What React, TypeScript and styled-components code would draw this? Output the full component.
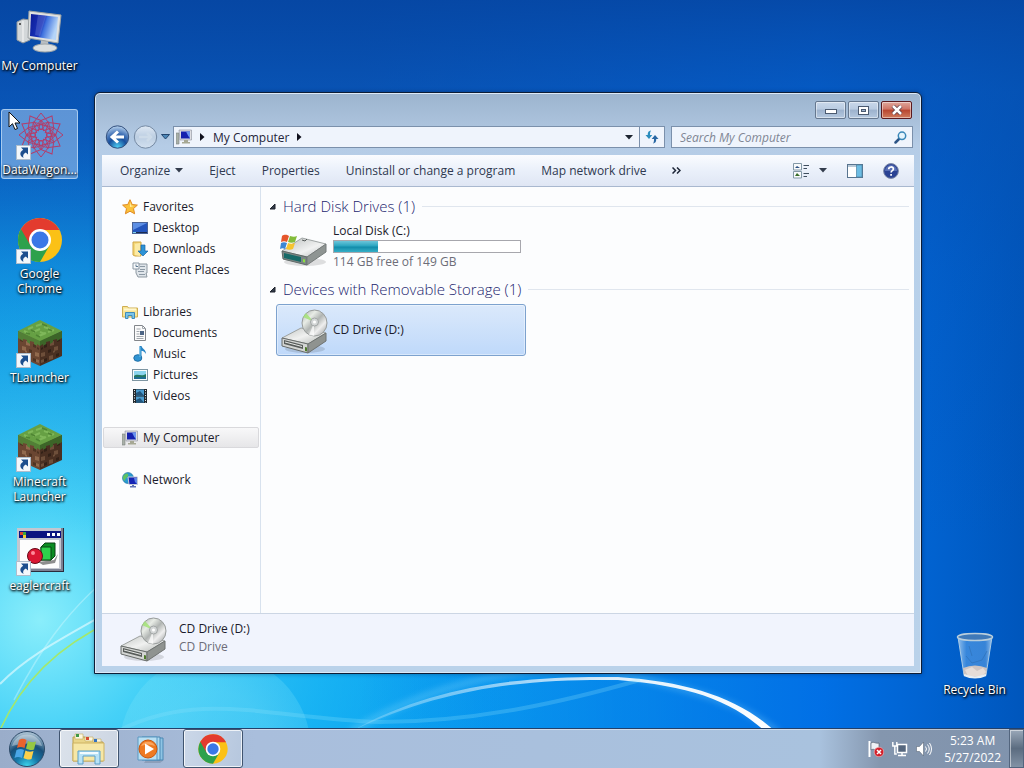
import React from "react";
import styled, { createGlobalStyle, css } from "styled-components";

const GlobalStyle = createGlobalStyle`
  * {
    box-sizing: border-box;
  }

  body {
    margin: 0;
    overflow: hidden;
    font-family: "Open Sans", "Noto Sans", sans-serif;
    font-size: 12px;
    line-height: 15px;
    color: #1b1b2b;
  }

  button,
  input {
    margin: 0;
    padding: 0;
    border: 0;
    background: none;
    font: inherit;
    color: inherit;
  }

  svg {
    display: block;
    flex-shrink: 0;
  }
`;

const Screen = styled.div`
  display: flex;
  flex-direction: column;
  height: 100vh;
  position: relative;
  isolation: isolate;
`;

const WallpaperSvg = styled.svg`
  position: absolute;
  inset: 0;
  width: 100%;
  height: 100%;
  z-index: -1;
`;

const Desktop = styled.main`
  flex: 1;
  min-height: 0;
  position: relative;
`;

const ShortcutColumn = styled.div`
  display: grid;
  grid-auto-rows: 104px;
  width: 78px;
  padding: 5px 0 0 1px;
`;

const ShortcutButton = styled.button<{ $selected?: boolean }>`
  display: flex;
  flex-direction: column;
  align-items: center;
  align-self: start;
  gap: 2px;
  width: 77px;
  padding: 2px 0 1px;
  border: 1px solid transparent;
  border-radius: 3px;
  color: #fff;
  text-shadow: 1px 1px 2px #000, 0 1px 3px #000;
  ${({ $selected }) =>
    $selected &&
    css`
      background: rgba(150, 190, 235, 0.6);
      border-color: rgba(185, 215, 245, 0.8);
    `}
`;

const ShortcutPicture = styled.span`
  position: relative;
  width: 48px;
  height: 48px;
`;

const ArrowBadge = styled.span`
  position: absolute;
  left: 0;
  bottom: 0;
`;

const ShortcutLabel = styled.span`
  white-space: nowrap;
  span {
    display: block;
  }
`;

const RecycleSpot = styled.div`
  position: absolute;
  right: 11px;
  bottom: 29px;
`;

const Cursor = styled.svg`
  position: absolute;
  left: 8px;
  top: 111px;
`;

const Window = styled.section`
  position: absolute;
  left: 94px;
  top: 92px;
  right: 102px;
  bottom: 54px;
  display: flex;
  flex-direction: column;
  padding: 0 7px 7px;
  border: 1px solid #0d1d36;
  border-radius: 6px 6px 0 0;
  background: linear-gradient(#9cb4ce, #b5cce6 52px, #b7d0ea 90px, #bad2ea);
  box-shadow: inset 0 0 0 1px #dce9f7, 0 0 4px rgba(0, 20, 60, 0.4);
`;

const Caption = styled.header`
  display: flex;
  justify-content: flex-end;
  gap: 2px;
  height: 32px;
  padding: 8px 2px 0 0;
`;

const CaptionButton = styled.button<{ $close?: boolean }>`
  display: grid;
  place-items: center;
  width: 31px;
  height: 18px;
  border: 1px solid ${({ $close }) => ($close ? "#5b1a1f" : "#66788f")};
  border-radius: 2px;
  background: ${({ $close }) =>
    $close
      ? "linear-gradient(#dfa79c, #cf7465 45%, #b8452f 50%, #d07c5e)"
      : "linear-gradient(#c9d8ea, #b9cbe1 45%, #9db2cd 50%, #b4c8df)"};
  box-shadow: inset 0 0 0 1px rgba(255, 255, 255, 0.45);
`;

const NavigationBar = styled.div`
  display: flex;
  align-items: center;
  height: 24px;
  margin-bottom: 6px;
  padding: 0 1px 0 3px;
`;

const TravelButtons = styled.div`
  display: flex;
  align-items: center;
  gap: 3px;
  margin-right: 3px;
`;

const AddressBar = styled.div`
  display: flex;
  align-items: center;
  flex: 1;
  height: 22px;
  border: 1px solid #7b90ab;
  background: #eff4fc;
`;

const Crumb = styled.button`
  display: flex;
  align-items: center;
  gap: 8px;
  height: 20px;
  padding-left: 2px;
  color: #25253a;
`;

const AddressButton = styled.button<{ $divided?: boolean }>`
  display: grid;
  place-items: center;
  width: ${({ $divided }) => ($divided ? 25 : 20)}px;
  height: 20px;
  margin-left: ${({ $divided }) => ($divided ? "0" : "auto")};
  border-left: ${({ $divided }) => ($divided ? "1px solid #7b90ab" : "0")};
`;

const SearchBox = styled.label`
  display: flex;
  align-items: center;
  width: 242px;
  height: 22px;
  margin-left: 6px;
  padding: 0 5px 0 8px;
  border: 1px solid #7b90ab;
  background: #eff4fc;
  input {
    flex: 1;
    min-width: 0;
    outline: none;
  }
  input::placeholder {
    color: #808694;
    font-style: italic;
    opacity: 1;
  }
`;

const Client = styled.div`
  display: flex;
  flex-direction: column;
  flex: 1;
  min-height: 0;
  background: #fcfdfe;
`;

const Toolbar = styled.div`
  display: flex;
  align-items: center;
  height: 32px;
  padding: 0 15px 0 18px;
  gap: 26px;
  border-bottom: 1px solid #a9b8cf;
  background: linear-gradient(#fafcff, #eaf0fa 50%, #dfe6f4);
  color: #2f3950;
`;

const ToolbarButton = styled.button`
  display: flex;
  align-items: center;
  gap: 5px;
  white-space: nowrap;
`;

const ToolbarEnd = styled.div`
  display: flex;
  align-items: center;
  gap: 20px;
  margin-left: auto;
`;

const Body = styled.div`
  display: flex;
  flex: 1;
  min-height: 0;
`;

const Sidebar = styled.nav`
  display: flex;
  flex-direction: column;
  gap: 21px;
  width: 159px;
  padding: 9px 1px 0;
  border-right: 1px solid #d8e2ee;
`;

const SidebarList = styled.ul`
  margin: 0;
  padding: 0;
  list-style: none;
`;

const SidebarButton = styled.button<{ $child?: boolean; $selected?: boolean }>`
  display: flex;
  align-items: center;
  gap: 5px;
  width: 100%;
  height: 21px;
  padding-left: ${({ $child }) => ($child ? 28 : 18)}px;
  border: 1px solid transparent;
  border-radius: 2px;
  ${({ $selected }) =>
    $selected &&
    css`
      border-color: #d9d9dc;
      background: linear-gradient(#f8f8f9, #e6e6e8);
    `}
`;

const Files = styled.div`
  flex: 1;
  padding: 6px 5px 0 8px;
`;

const GroupTitle = styled.h2`
  display: flex;
  align-items: center;
  gap: 7px;
  height: 26px;
  margin: 0;
  font-size: 15px;
  font-weight: 300;
  line-height: 20px;
  color: #1c266e;
  white-space: nowrap;
  &::after {
    content: "";
    flex: 1;
    height: 1px;
    background: #e0e6ee;
  }
`;

const DriveButton = styled.button<{ $selected?: boolean }>`
  display: flex;
  align-items: center;
  gap: 5px;
  width: 250px;
  height: 52px;
  margin: 2px 0 3px 7px;
  padding: 0 4px 0 3px;
  border: 1px solid transparent;
  border-radius: 3px;
  text-align: left;
  ${({ $selected }) =>
    $selected &&
    css`
      border-color: #7da2ce;
      background: linear-gradient(#dbe9fb, #bfd9fa);
      box-shadow: inset 0 0 0 1px rgba(255, 255, 255, 0.4);
    `}
`;

const DriveText = styled.span`
  flex: 1;
  padding-bottom: 2px;
`;

const Muted = styled.span`
  display: block;
  color: #6d6d78;
`;

const Capacity = styled.span`
  display: block;
  height: 13px;
  margin: 2px 0 1px;
  border: 1px solid #a7a7ad;
  background: #fff;
`;

const CapacityUsed = styled.span`
  display: block;
  height: 100%;
  background: linear-gradient(#6cc5da, #2aa5c0 45%, #128ba9 55%, #35b0c8);
`;

const DetailsPane = styled.footer`
  display: flex;
  align-items: center;
  gap: 12px;
  height: 53px;
  padding: 0 17px 4px;
  border-top: 1px solid #ccd6e4;
  background: #f1f4fd;
  line-height: 18px;
`;

const Taskbar = styled.footer`
  display: flex;
  height: 40px;
  border-top: 1px solid #23406a;
  background: linear-gradient(
    90deg,
    #9aadca,
    #a9bedc 25%,
    #a9c2de 80%,
    #8496ae 86%,
    #8093ad
  );
  box-shadow: inset 0 1px 0 rgba(255, 255, 255, 0.45);
`;

const StartButton = styled.button`
  display: grid;
  place-items: center;
  width: 54px;
`;

const TaskButton = styled.button<{ $open?: boolean; $bright?: boolean }>`
  display: grid;
  place-items: center;
  width: 60px;
  margin-left: ${({ $bright }) => ($bright ? 5 : 2)}px;
  border: 1px solid transparent;
  border-radius: 3px;
  ${({ $open, $bright }) =>
    $open &&
    css`
      border-color: #40546f;
      background: ${$bright
        ? "linear-gradient(100deg, #dbe2eb, #ccd5e2)"
        : "linear-gradient(100deg, #cbd7e8, #b6c7de)"};
      box-shadow: inset 0 0 0 1px rgba(255, 255, 255, 0.75);
    `}
`;

const Tray = styled.div`
  display: flex;
  align-items: center;
  gap: 8px;
  margin-left: auto;
`;

const Clock = styled.time`
  margin-left: 4px;
  color: #fff;
  text-align: center;
  line-height: 17px;
  span {
    display: block;
  }
`;

const ShowDesktop = styled.button`
  align-self: stretch;
  width: 15px;
  border: 1px solid #53657e;
  background: linear-gradient(#9aa8b9, #5b6c80 50%, #8292a5);
  box-shadow: inset 1px 1px 0 rgba(255, 255, 255, 0.5);
`;

const Wallpaper = () => (
  <WallpaperSvg viewBox="0 0 1024 768" preserveAspectRatio="none" aria-hidden>
    <defs>
      <linearGradient id="sky" x1="0" y1="0" x2="0" y2="1">
        <stop offset="0" stopColor="#0647a4" />
        <stop offset="0.12" stopColor="#0a58ba" />
        <stop offset="0.25" stopColor="#0c74d2" />
        <stop offset="0.4" stopColor="#0f96e6" />
        <stop offset="0.7" stopColor="#0fa6f0" />
        <stop offset="1" stopColor="#0aa4f2" />
      </linearGradient>
      <radialGradient
        id="glow"
        gradientUnits="userSpaceOnUse"
        cx="40"
        cy="620"
        r="480"
      >
        <stop offset="0" stopColor="#8aeefb" />
        <stop offset="0.25" stopColor="#4cd6f8" stopOpacity="0.9" />
        <stop offset="0.6" stopColor="#20bcf4" stopOpacity="0.6" />
        <stop offset="1" stopColor="#0c9cec" stopOpacity="0" />
      </radialGradient>
      <linearGradient id="right" x1="0" y1="0" x2="1" y2="0">
        <stop offset="0.35" stopColor="#0068e4" stopOpacity="0" />
        <stop offset="0.8" stopColor="#006ae4" stopOpacity="0.9" />
        <stop offset="1" stopColor="#0056bc" />
      </linearGradient>
      <linearGradient id="top" x1="0" y1="0" x2="0" y2="1">
        <stop offset="0" stopColor="#0647a4" stopOpacity="0.9" />
        <stop offset="0.12" stopColor="#0850b0" stopOpacity="0.6" />
        <stop offset="0.35" stopColor="#0850b0" stopOpacity="0.2" />
        <stop offset="0.7" stopColor="#0850b0" stopOpacity="0" />
      </linearGradient>
      <linearGradient id="arc" x1="0" y1="0" x2="1" y2="0">
        <stop offset="0" stopColor="#fff" stopOpacity="0.15" />
        <stop offset="0.6" stopColor="#fff" stopOpacity="0.85" />
        <stop offset="1" stopColor="#fff" />
      </linearGradient>
      <radialGradient id="bubble">
        <stop offset="0.6" stopColor="#8feaf8" stopOpacity="0.3" />
        <stop offset="1" stopColor="#8feaf8" stopOpacity="0.2" />
      </radialGradient>
      <filter id="soft">
        <feGaussianBlur stdDeviation="3" />
      </filter>
    </defs>
    <rect width="1024" height="768" fill="url(#sky)" />
    <rect width="1024" height="768" fill="url(#glow)" />
    <rect width="1024" height="768" fill="url(#right)" />
    <rect width="1024" height="768" fill="url(#top)" />
    <circle cx="215" cy="750" r="96" fill="url(#bubble)" />
    <path
      d="M350 732C450 672 560 660 630 676C690 690 740 700 780 735"
      fill="none"
      stroke="#9be4ff"
      strokeWidth="6"
      opacity="0.3"
      filter="url(#soft)"
    />
    <path
      d="M350 732C440 680 540 676 618 677C690 682 740 698 778 734L768 734C732 700 690 686 618 680C540 679 450 684 350 732Z"
      fill="url(#arc)"
    />
    <path
      d="M120 730C200 690 270 718 380 722C480 722 570 700 640 680"
      fill="none"
      stroke="#8fe4fc"
      strokeWidth="4"
      opacity="0.25"
    />
    <path
      d="M0 684C28 655 60 640 130 600"
      fill="none"
      stroke="#effdff"
      strokeWidth="2"
      opacity="0.6"
    />
    <path
      d="M0 730C18 690 50 650 110 622"
      fill="none"
      stroke="#a4e86a"
      strokeWidth="1.500"
    />
    <path
      d="M14 700C30 670 60 610 130 560"
      fill="none"
      stroke="#d6fbff"
      strokeWidth="1.500"
      opacity="0.4"
    />
  </WallpaperSvg>
);

const ShortcutArrow = () => (
  <svg width="15" height="15" viewBox="0 0 15 15">
    <rect x=".5" y=".5" width="14" height="14" fill="#f3f7fb" stroke="#aebdcc" />
    <path
      d="M5 2.500h7v7L9.800 7.400C7.500 8.500 6.500 10.500 7.500 13C3.500 11 3.200 7 7.200 4.800Z"
      fill="#1c4e8e"
    />
  </svg>
);

const ComputerIcon = () => (
  <svg width="48" height="48" viewBox="0 0 48 48">
    <defs>
      <linearGradient id="crt" x1="0" y1="0" x2="1" y2="0.300">
        <stop offset="0" stopColor="#0b1a94" />
        <stop offset="0.500" stopColor="#1a34bc" />
        <stop offset="0.620" stopColor="#3f72de" />
        <stop offset="1" stopColor="#b4d4f8" />
      </linearGradient>
    </defs>
    <path d="M1 14l6-3 7 1v20l-7 3-6-3z" fill="#d3d7d9" stroke="#8f979d" />
    <path d="M7 13v21" stroke="#f8f8f8" />
    <circle cx="4" cy="16" r="1" fill="#333" />
    <path d="M25 32l7 1 1 7h-9z" fill="#b9bec2" />
    <ellipse cx="29" cy="40" rx="12" ry="4" fill="#dcdfdf" stroke="#9ea5a8" />
    <path d="M13 3l32 4-3 28-30-5z" fill="#dfe1e1" stroke="#9da3a5" />
    <path d="M15 6l27 3-2 23-26-4z" fill="url(#crt)" />
    <path d="M22 7l8 1-6 20-5-1z" fill="#fff" opacity=".14" />
  </svg>
);

const SmallComputerIcon = () => (
  <svg width="16" height="16" viewBox="0 0 16 16">
    <path d="M0 4h3v11H0z" fill="#a9b0a8" stroke="#7d857f" strokeWidth=".6" />
    <path d="M3 1h12.500v10H4z" fill="#dedfe4" stroke="#8b8f9a" strokeWidth=".6" />
    <path d="M5 2.500h9v7H5z" fill="#1521ae" />
    <path d="M10 2.500h4v7l-2-3z" fill="#6a93ee" />
    <path d="M8 11h4v2h2v1.500H6V13h2z" fill="#a6a894" />
  </svg>
);

const SpirographIcon = () => (
  <svg width="48" height="48" viewBox="0 0 48 48">
    <g fill="none" stroke="#b23e6c" strokeWidth="1" transform="translate(25 23)">
      {Array.from({ length: 12 }, (_, i) => (
        <g key={i} transform={`rotate(${i * 30})`}>
          <path d="M0 -5L-7 -13L0 -22L7 -13Z" />
          <path d="M-10 -4L0 -15L10 -4" opacity=".8" />
        </g>
      ))}
      <circle r="6" />
    </g>
  </svg>
);

const ChromeIcon = ({ size = 48 }: { size?: number }) => (
  <svg width={size} height={size} viewBox="0 0 48 48">
    <circle cx="24" cy="24" r="22" fill="#fbc116" />
    <path d="M24 24L33.500 29.500L24 46A22 22 0 0 1 4.950 13Z" fill="#2da14c" />
    <path d="M24 14H43.600A22 22 0 0 0 4.950 13L14.500 29.500Z" fill="#e33b2e" />
    <circle cx="24" cy="24" r="11" fill="#fff" />
    <circle cx="24" cy="24" r="8.500" fill="#3b78e7" />
  </svg>
);

const leftDirt = [
  [4, 19, 3], [10, 22, 4], [17, 25, 3], [6, 27, 4], [13, 30, 3], [19, 33, 4],
  [5, 34, 3], [11, 36, 4], [17, 39, 3], [9, 31, 2], [21, 28, 2], [20, 40, 3],
];

const GrassBlockIcon = () => (
  <svg width="48" height="48" viewBox="0 0 48 48">
    <path d="M2 11L24 20V46L2 36Z" fill="#6b4632" />
    <path d="M46 11L24 20V46L46 36Z" fill="#4a3022" />
    {leftDirt.map(([x, y, s], i) => (
      <g key={i}>
        <path
          d={`M${x} ${y - 1}l${s} 1v${s}l-${s}-1z`}
          fill={i % 2 ? "#91694d" : "#4e3322"}
        />
        <path
          d={`M${48 - x} ${y - 1}l-${s} 1v${s}l${s}-1z`}
          fill={i % 2 ? "#6e4f3a" : "#332117"}
        />
      </g>
    ))}
    <path d="M24 0L46 11L24 22L2 11Z" fill="#66a044" />
    <path
      d="M2 11L24 21v5l-3-2v2l-3-2v-2l-4-1v3l-3-2v-2l-4-1v2l-5-3Z"
      fill="#527f36"
    />
    <path
      d="M46 11L24 21v5l3-2v2l3-2v-2l4-1v3l3-2v-2l4-1v2l5-3Z"
      fill="#3c6528"
    />
    <path
      d="M12 9l5-2M20 6l6-2M17 12l7-3M28 7l6 2M23 16l7-3M32 12l6-2M8 11l4 2M24 12l5 2"
      stroke="#7fb85a"
      strokeWidth="2"
    />
    <path
      d="M15 10l4 2M26 4l5 2M20 15l4 2M32 9l4 2M10 13l4 1"
      stroke="#4f8534"
      strokeWidth="1.500"
    />
  </svg>
);

const ProgramIcon = () => (
  <svg width="48" height="48" viewBox="0 0 48 48">
    <rect x="1" y="0" width="47" height="44" fill="#2a2c3c" />
    <rect x="1" y="0" width="46" height="43" fill="#7b8092" />
    <rect x="1" y="0" width="44" height="41" fill="#c3c7d0" />
    <rect x="3" y="3" width="42" height="7" fill="#0b1480" />
    <path d="M4 4h3v3H4z" fill="#dc442c" />
    <path d="M7 4h3v3H7z" fill="#3ba53b" />
    <path d="M7 7h3v3H7z" fill="#f3c932" />
    <path d="M31 5h3v3h-3zM36 5h3v3h-3zM41 5h3v3h-3z" fill="#fff" />
    <path d="M4 12h39v28H4z" fill="#fdfdfd" />
    <path d="M22 34l16-2 4-6-3 9-12 2z" fill="#8e8e8e" />
    <path d="M25 19l4-4h10v13l-4 4H25z" fill="#0c8c23" stroke="#0a4314" />
    <path d="M25 19h10v13H25z" fill="#2ed14b" stroke="#0a4314" />
    <circle cx="19" cy="28" r="7.500" fill="#da1733" stroke="#650918" />
    <circle cx="17" cy="25" r="2" fill="#ff8c9b" />
  </svg>
);

const RecycleBinIcon = () => (
  <svg width="48" height="48" viewBox="0 0 48 48">
    <defs>
      <linearGradient id="glass" x1="0" y1="0" x2="1" y2="0">
        <stop offset="0" stopColor="#d7ecfb" stopOpacity=".7" />
        <stop offset=".25" stopColor="#6fb0ee" stopOpacity=".5" />
        <stop offset=".8" stopColor="#7bb6ee" stopOpacity=".45" />
        <stop offset="1" stopColor="#e0f0fb" stopOpacity=".7" />
      </linearGradient>
    </defs>
    <path d="M7 5H41L35 43Q24 48 13 43Z" fill="url(#glass)" stroke="#a9cbe6" />
    <path d="M12 36Q24 31 36 36L35 43Q24 48 13 43Z" fill="#cfc5c2" />
    <path d="M14 38l7-3 5 4 6-3 3 4-4 4H17z" fill="#e6ddd8" />
    <path d="M15 24l6 7 10-3 5-9M18 14l3 10" fill="none" stroke="#2f72b9" opacity=".7" />
    <ellipse cx="24" cy="5" rx="17.500" ry="3.500" fill="#3f79b8" stroke="#b9cedc" strokeWidth="1.500" />
    <path d="M13 43Q24 48 35 43" stroke="#e8eff4" strokeWidth="2" fill="none" />
  </svg>
);

const HardDiskIcon = () => (
  <svg width="48" height="48" viewBox="0 0 48 48">
    <defs>
      <linearGradient id="lid" x1="0" y1="0" x2="1" y2="1">
        <stop offset="0" stopColor="#b9bdbc" />
        <stop offset=".6" stopColor="#f1f2f2" />
        <stop offset="1" stopColor="#b4b8b7" />
      </linearGradient>
    </defs>
    <ellipse cx="25" cy="39" rx="21" ry="4" fill="#000" opacity=".12" />
    <path d="M2 28L22 15L46 21L27 34Z" fill="url(#lid)" stroke="#a0a5a5" />
    <path d="M2 28L27 34V42L3 36Z" fill="#7d8785" stroke="#5f6967" />
    <path d="M27 34L46 21V29L27 42Z" fill="#8f9593" stroke="#757b7a" />
    <path d="M4 30L21 34V39L4 35Z" fill="#176a68" />
    <path d="M23 36l2 .5v3l-2-.5z" fill="#8be33f" />
    <path d="M22 17l3 1 2-2" fill="none" stroke="#555b5a" />
    <path d="M2 13c3-2 5-1 7 0l-2 6c-2-1-4-1-6 0z" fill="#e5562b" />
    <path d="M10 13c3 1 5 1 7 0l-2 6c-2 1-5 1-7 0z" fill="#83bc3b" />
    <path d="M1 20c2-1 4-1 6 0l-2 6c-2-1-3-1-5 0z" fill="#3c86d4" />
    <path d="M8 20c2 1 5 1 7 0l-2 6c-2 1-5 1-7 0z" fill="#f6c42f" />
  </svg>
);

const CdDriveIcon = () => (
  <svg width="48" height="48" viewBox="0 0 48 48">
    <defs>
      <linearGradient id="disc" x1="0" y1="0" x2="1" y2="1">
        <stop offset="0" stopColor="#a5aaa7" />
        <stop offset=".3" stopColor="#e8ece6" />
        <stop offset=".5" stopColor="#b0b4b2" />
        <stop offset=".7" stopColor="#efefef" />
        <stop offset="1" stopColor="#8f9394" />
      </linearGradient>
      <linearGradient id="tray" x1="0" y1="0" x2="1" y2="1">
        <stop offset="0" stopColor="#c3c6c4" />
        <stop offset=".5" stopColor="#f0f1f0" />
        <stop offset="1" stopColor="#b2b6b3" />
      </linearGradient>
    </defs>
    <ellipse cx="25" cy="43" rx="20" ry="4" fill="#000" opacity=".12" />
    <path d="M2 32L21 22L46 27L28 38Z" fill="url(#tray)" stroke="#9ea2a0" />
    <ellipse cx="34.500" cy="17" rx="12.500" ry="13" fill="url(#disc)" stroke="#989c9b" />
    <path d="M34 16L23 11l3-4z" fill="#a3e378" opacity=".85" />
    <path d="M34 17L29 29l5 1z" fill="#fff" opacity=".7" />
    <ellipse cx="34.500" cy="16" rx="4" ry="4" fill="#d3d6d6" stroke="#a2a6a6" />
    <circle cx="34.500" cy="16" r="1.500" fill="#fff" />
    <path d="M2 32L28 38V47L2 40Z" fill="#d3d5d3" stroke="#676b69" />
    <path d="M28 38L46 27V35L28 47Z" fill="#8f9390" stroke="#6e7270" />
    <path d="M4 34l19 5v4L4 38z" fill="#585c5a" />
    <path d="M5 36l17 4.500" stroke="#e6e8e6" />
    <path d="M25 41l2 .5v4l-2-.5z" fill="#4d7b2a" />
  </svg>
);

const StarIcon = () => (
  <svg width="16" height="16" viewBox="0 0 16 16">
    <path
      d="M8 .7l2.200 4.800 5.200.6-3.900 3.500 1.100 5.200L8 12.200l-4.600 2.600 1.100-5.200L.6 6.100l5.200-.6z"
      fill="#fbc23b"
      stroke="#e08a24"
    />
    <path d="M8 3l1 3.500 3 .5-4 1z" fill="#fff0a8" />
  </svg>
);

const DesktopIcon = () => (
  <svg width="16" height="16" viewBox="0 0 16 16">
    <rect x=".5" y="2.500" width="15" height="11" fill="#2456bd" stroke="#4a6396" />
    <path d="M1 3h14L1 10z" fill="#5d8fe4" />
    <path d="M1 12.500h14" stroke="#1b2c52" />
    <path d="M1 12.500h3" stroke="#7ed0ee" />
  </svg>
);

const DownloadsIcon = () => (
  <svg width="16" height="16" viewBox="0 0 16 16">
    <path d="M1 1h8v14H3l-2-1z" fill="#f4d878" stroke="#cfa544" />
    <path d="M3 3l5-1v13l-5-1z" fill="#fbeaa5" />
    <path d="M9 4h4v6h3l-5 5-5-5h3z" fill="#2d93d6" stroke="#1a66a6" strokeWidth=".7" />
  </svg>
);

const RecentIcon = () => (
  <svg width="16" height="16" viewBox="0 0 16 16">
    <path d="M4 2h11v9h-1l1 4H6l-2-4z" fill="#dfe5ea" stroke="#8d98a1" />
    <path d="M1 1h6v6H1z" fill="#f6f8fa" stroke="#8b98a4" />
    <path d="M8 4.500h5M8 7.500h5M6 9.500h6M7 12.500h6" stroke="#8b98a4" />
    <path d="M4 2.500v2h2" stroke="#5b7890" fill="none" />
  </svg>
);

const LibrariesIcon = () => (
  <svg width="16" height="16" viewBox="0 0 16 16">
    <path d="M.5 2.500h5l1 1.500h9v9H.5z" fill="#f8e596" stroke="#cfae52" />
    <path d="M2 5.500h12" stroke="#fff7cf" strokeWidth="2" />
    <path d="M3.500 14.500V8.500h9v6h-2.500v-3h-4v3z" fill="#7bc4e8" stroke="#3f8cba" />
  </svg>
);

const DocumentIcon = () => (
  <svg width="16" height="16" viewBox="0 0 16 16">
    <path d="M2.500.5h8l3 3v12h-11z" fill="#fbfbfb" stroke="#82868b" />
    <path d="M10.500.5v3h3M4.500 4h4M4.500 6.500h3M4.500 9h3M4.500 11.500h7M4.500 13.500h7" fill="none" stroke="#a2a8ae" />
    <path d="M8 6h4v4H8z" fill="#4c6484" />
  </svg>
);

const MusicIcon = () => (
  <svg width="16" height="16" viewBox="0 0 16 16">
    <path d="M7.500 0H9.500c1 3 4.500 3.500 4.500 8-1.500-2.500-3-3-4.500-3.200V12h-2z" fill="#2784c5" />
    <ellipse cx="5.800" cy="12" rx="4" ry="3.300" fill="#2f94d3" stroke="#1f6ea6" />
    <path d="M8 1v10" stroke="#71c5ec" />
  </svg>
);

const PicturesIcon = () => (
  <svg width="16" height="16" viewBox="0 0 16 16">
    <rect x=".5" y="2.500" width="15" height="11" fill="#f7fbfc" stroke="#7d95a2" />
    <path d="M2 4h12v8H2z" fill="#8bd4ee" />
    <path d="M2 9c4-3 7 1 12-2v5H2z" fill="#23775f" />
    <path d="M2 10h12v2H2z" fill="#1c6c92" />
  </svg>
);

const VideosIcon = () => (
  <svg width="16" height="16" viewBox="0 0 16 16">
    <path d="M1 1h14v14H1z" fill="#23292e" />
    <path d="M4 1.500h8v6H4zM4 8.500h8v6H4z" fill="#4c9dd0" />
    <path d="M4 5l4-2 4 4.500H4zM4 12l4-2 4 4.500H4z" fill="#22577e" />
    <path d="M2.500 2v13M13.500 2v13" stroke="#e8edf0" strokeDasharray="1 1.500" />
  </svg>
);

const NetworkIcon = () => (
  <svg width="16" height="16" viewBox="0 0 16 16">
    <circle cx="6" cy="6" r="5.500" fill="#2a9ad0" stroke="#1d6f9f" strokeWidth=".6" />
    <path d="M2 3c3-3 5-1 4 1S3 6 3 9C1 8 0 5 2 3z" fill="#5ec263" />
    <path d="M6 5h9.500v7.500H7z" fill="#1525b4" stroke="#c5cbd8" />
    <path d="M12 6h3v6l-2-2z" fill="#5f85e8" />
    <path d="M10 13h2v1h2v1.500H8V14h2z" fill="#5f74b4" />
  </svg>
);

const TravelIcon = ({ forward }: { forward?: boolean }) => (
  <svg width="25" height="24" viewBox="0 0 25 24">
    <defs>
      <radialGradient id="back" cx=".5" cy=".95" r=".9">
        <stop offset="0" stopColor="#4fd0f4" />
        <stop offset=".45" stopColor="#174f9d" />
        <stop offset=".7" stopColor="#4978ba" />
        <stop offset="1" stopColor="#a9c6e6" />
      </radialGradient>
      <linearGradient id="forward" x1="0" y1="0" x2="0" y2="1">
        <stop offset="0" stopColor="#dfe9f4" />
        <stop offset=".5" stopColor="#bccee2" />
        <stop offset="1" stopColor="#d3e1f0" />
      </linearGradient>
    </defs>
    <circle
      cx="12.500"
      cy="12"
      r="11.200"
      fill={forward ? "url(#forward)" : "url(#back)"}
      stroke={forward ? "#7388a2" : "#34517e"}
    />
    {forward ? (
      <path d="M6 12h12M14 8l4 4-4 4" fill="none" stroke="#cddbe9" strokeWidth="2.500" />
    ) : (
      <path d="M19 12H8M13 6.500L7 12l6 5.500" fill="none" stroke="#fff" strokeWidth="3" />
    )}
  </svg>
);

const DownCaret = ({ color = "#1c2430" }: { color?: string }) => (
  <svg width="8" height="5" viewBox="0 0 8 5">
    <path d="M0 0h8L4 4.500z" fill={color} />
  </svg>
);

const RightCaret = () => (
  <svg width="5" height="8" viewBox="0 0 5 8">
    <path d="M0 0v8l4.500-4z" fill="#10101c" />
  </svg>
);

const GroupCaret = () => (
  <svg width="7" height="7" viewBox="0 0 7 7">
    <path d="M6 1v5H1z" fill="#333b48" stroke="#1e232c" />
  </svg>
);

const RefreshIcon = () => (
  <svg width="14" height="14" viewBox="0 0 14 14">
    <path d="M6 0.500C3 1 2.800 3 2.800 5H.5l3.500 4 3.300-4H5C5 3.500 5 2 6 .5z" fill="#2b8dbd" />
    <path d="M8 13.500c3-.5 3.200-2.500 3.200-4.500h2.300L10 5 6.700 9H9c0 1.500 0 3-1 4.500z" fill="#2766a3" />
  </svg>
);

const SearchIcon = () => (
  <svg width="13" height="13" viewBox="0 0 13 13">
    <path d="M6 7L1.500 11.500" stroke="#2c5486" strokeWidth="2.500" strokeLinecap="round" />
    <circle cx="8" cy="4.800" r="3.700" fill="#e6f4fc" stroke="#3a87b8" strokeWidth="1.500" />
  </svg>
);

const ViewIcon = () => (
  <svg width="17" height="16" viewBox="0 0 17 16">
    <path d="M.5.5h8v6.500h-8zM.5 8.500h8V15h-8z" fill="#f8fafb" stroke="#8499a7" />
    <path d="M2 5l2-2 3 2z" fill="#2b4f81" />
    <path d="M2 13l2-3 3 3z" fill="#386c2a" />
    <path d="M10.500 2.500H16M10.500 5.500H14M10.500 10.500H16M10.500 13.500H14" stroke="#3f4e5e" />
  </svg>
);

const PreviewPaneIcon = () => (
  <svg width="16" height="14" viewBox="0 0 16 14">
    <rect x=".5" y=".5" width="15" height="13" fill="#fff" stroke="#58748f" />
    <path d="M1 2h9" stroke="#b9cad8" strokeWidth="2" />
    <rect x="9.500" y="1" width="5.500" height="12" fill="#6dbde4" stroke="#4a83a4" strokeWidth=".7" />
  </svg>
);

const HelpIcon = () => (
  <svg width="16" height="16" viewBox="0 0 16 16">
    <circle cx="8" cy="8" r="7.400" fill="#2a4294" stroke="#7d8aa8" />
    <path d="M2 8a6 6 0 0 1 12 0z" fill="#6c83c4" opacity=".7" />
    <path
      d="M5.700 6.300C5.700 3.200 10.500 3.300 10.400 6c0 1.700-2.300 1.600-2.300 3.500M8.100 11v1.800"
      fill="none"
      stroke="#fff"
      strokeWidth="1.700"
    />
  </svg>
);

const StartIcon = () => (
  <svg width="38" height="38" viewBox="0 0 38 38">
    <defs>
      <radialGradient id="orb" cx=".5" cy="1" r=".95">
        <stop offset="0" stopColor="#3fd9ef" />
        <stop offset=".35" stopColor="#1678a8" />
        <stop offset=".65" stopColor="#184f79" />
        <stop offset="1" stopColor="#a4bdd0" />
      </radialGradient>
    </defs>
    <circle cx="19" cy="19" r="17.500" fill="url(#orb)" stroke="#2d4a68" />
    <path d="M4 16A15.500 15.500 0 0 1 34 16Q19 11 4 16z" fill="#fff" opacity=".35" />
    <path d="M11 10c3-2 5-1.500 7.500 0l-2 8c-3-1.500-5-1.500-7.500 0z" fill="#e9632d" />
    <path d="M20 11c3 1.500 5 1.500 8 .5l-2 8c-3 1-5 .5-8-1z" fill="#96c843" />
    <path d="M8.500 20c3-1.500 5-1.500 7.500 0l-2 8c-3-1.500-5-1.500-7.500 0z" fill="#4aa6e6" />
    <path d="M17.500 20.500c3 1.500 5 1.500 8 .5l-2 8c-3 1-5 .5-8-1z" fill="#fbd04a" />
  </svg>
);

const ExplorerIcon = () => (
  <svg width="36" height="32" viewBox="0 0 36 32">
    <path d="M2 4h12l2 3h10l2 2h4v19H2z" fill="#e9d589" stroke="#b99f4f" />
    <path d="M4 1h8v5H4zM14 4h8v4h-8zM22 6h8v3h-8z" fill="#fdf8df" stroke="#c2a95c" strokeWidth=".6" />
    <path d="M5 1h3v3H5z" fill="#3e9846" />
    <path d="M15 4h3v3h-3z" fill="#d44a33" />
    <path d="M23 6h3v3h-3z" fill="#3372c1" />
    <path d="M2 10h31v18H2z" fill="#f6e7a6" stroke="#cdb262" />
    <path d="M7 31V18h22v13h-5v-8H12v8z" fill="#b8e2f6" stroke="#5a9fc8" />
    <path d="M9 20h18" stroke="#f2fbff" strokeWidth="2" />
  </svg>
);

const MediaPlayerIcon = () => (
  <svg width="30" height="28" viewBox="0 0 30 28">
    <path d="M10 25h18l-4 3H8z" fill="#6b7b90" opacity=".4" />
    <path d="M9 3h18v22H9z" fill="#8ec4e4" stroke="#4a88b4" />
    <path d="M6 2h18v23H6z" fill="#addaf0" stroke="#4a88b4" />
    <path d="M2 2h19v23H2z" fill="#b9e0f3" stroke="#5b98c2" />
    <circle cx="12" cy="14" r="9" fill="#ee7a22" stroke="#c9560d" />
    <path d="M5 11a8 8 0 0 1 14 0q-7-3-14 0z" fill="#ffb877" opacity=".7" />
    <path d="M9 8.500v11l9-5.500z" fill="#fff" />
  </svg>
);

const FlagIcon = () => (
  <svg width="16" height="16" viewBox="0 0 16 16">
    <path d="M1.500 0v16" stroke="#fff" strokeWidth="2" />
    <path d="M3 2c3-2 4 1 8 0v7c-4 1-5-2-8 0z" fill="#eef1f5" stroke="#46505e" strokeWidth=".6" />
    <circle cx="11" cy="11" r="4.800" fill="#d3202b" stroke="#f4c7c9" strokeWidth=".6" />
    <path d="M9 9l4 4M13 9l-4 4" stroke="#fff" strokeWidth="1.500" />
  </svg>
);

const TrayNetworkIcon = () => (
  <svg width="16" height="16" viewBox="0 0 16 16">
    <path d="M5.500 3.500h9v8h-9z" fill="#56677e" stroke="#fff" strokeWidth="1.500" />
    <path d="M10 12v2M6 14.500h8" stroke="#fff" strokeWidth="1.500" />
    <path d="M.8 1v4h4V1M2.800 5v8h2" fill="none" stroke="#fff" strokeWidth="1.400" />
  </svg>
);

const VolumeIcon = () => (
  <svg width="16" height="16" viewBox="0 0 16 16">
    <path d="M.5 5.500h3l4-4.500v14l-4-4.500h-3z" fill="#fff" stroke="#4a5869" strokeWidth=".5" />
    <path d="M9.500 5.500q2 2.500 0 5M11.500 3.500q3.500 4.500 0 9M13.500 2q4 6 0 12" fill="none" stroke="#fff" />
  </svg>
);

const shortcuts = [
  { lines: ["My Computer"], icon: <ComputerIcon /> },
  { lines: ["DataWagon..."], icon: <SpirographIcon />, arrow: true, selected: true },
  { lines: ["Google", "Chrome"], icon: <ChromeIcon />, arrow: true },
  { lines: ["TLauncher"], icon: <GrassBlockIcon />, arrow: true },
  { lines: ["Minecraft", "Launcher"], icon: <GrassBlockIcon />, arrow: true },
  { lines: ["eaglercraft"], icon: <ProgramIcon />, arrow: true },
];

const sidebarGroups = [
  [
    { name: "Favorites", icon: <StarIcon /> },
    { name: "Desktop", icon: <DesktopIcon />, child: true },
    { name: "Downloads", icon: <DownloadsIcon />, child: true },
    { name: "Recent Places", icon: <RecentIcon />, child: true },
  ],
  [
    { name: "Libraries", icon: <LibrariesIcon /> },
    { name: "Documents", icon: <DocumentIcon />, child: true },
    { name: "Music", icon: <MusicIcon />, child: true },
    { name: "Pictures", icon: <PicturesIcon />, child: true },
    { name: "Videos", icon: <VideosIcon />, child: true },
  ],
  [{ name: "My Computer", icon: <SmallComputerIcon />, selected: true }],
  [{ name: "Network", icon: <NetworkIcon /> }],
];

interface ShortcutProps {
  lines: string[];
  icon: React.ReactNode;
  arrow?: boolean;
  selected?: boolean;
}

const Shortcut: React.FC<ShortcutProps> = ({ lines, icon, arrow, selected }) => (
  <ShortcutButton $selected={selected}>
    <ShortcutPicture>
      {icon}
      {arrow && (
        <ArrowBadge>
          <ShortcutArrow />
        </ArrowBadge>
      )}
    </ShortcutPicture>
    <ShortcutLabel>
      {lines.map((line) => (
        <span key={line}>{line}</span>
      ))}
    </ShortcutLabel>
  </ShortcutButton>
);

const Explorer: React.FC = () => {
  const total = 149;
  const free = 114;

  return (
    <Window aria-label="My Computer">
      <Caption>
        <CaptionButton aria-label="Minimize">
          <svg width="12" height="8" viewBox="0 0 12 8">
            <rect x=".5" y="3.500" width="11" height="4" fill="#fff" stroke="#4b5a70" />
          </svg>
        </CaptionButton>
        <CaptionButton aria-label="Maximize">
          <svg width="11" height="9" viewBox="0 0 11 9">
            <rect x=".5" y=".5" width="10" height="8" fill="#fff" stroke="#4b5a70" />
            <rect x="3.500" y="3.500" width="4" height="2" fill="#9db2cd" stroke="#4b5a70" />
          </svg>
        </CaptionButton>
        <CaptionButton $close aria-label="Close">
          <svg width="12" height="10" viewBox="0 0 12 10">
            <path d="M2 1l8 8M10 1L2 9" stroke="#5a3a44" strokeWidth="4" />
            <path d="M2 1l8 8M10 1L2 9" stroke="#fff" strokeWidth="2.500" />
          </svg>
        </CaptionButton>
      </Caption>
      <NavigationBar>
        <TravelButtons>
          <button aria-label="Back">
            <TravelIcon />
          </button>
          <button aria-label="Forward">
            <TravelIcon forward />
          </button>
          <button aria-label="Recent pages">
            <svg width="9" height="6" viewBox="0 0 9 6">
              <path d="M.5.5h8l-4 4.500z" fill="#4d88b8" stroke="#23466f" />
            </svg>
          </button>
        </TravelButtons>
        <AddressBar>
          <Crumb>
            <SmallComputerIcon />
            <RightCaret />
            My Computer
            <RightCaret />
          </Crumb>
          <AddressButton aria-label="Previous locations">
            <DownCaret />
          </AddressButton>
          <AddressButton $divided aria-label="Refresh">
            <RefreshIcon />
          </AddressButton>
        </AddressBar>
        <SearchBox>
          <input aria-label="Search" placeholder="Search My Computer" />
          <SearchIcon />
        </SearchBox>
      </NavigationBar>
      <Client>
        <Toolbar>
          <ToolbarButton>
            Organize
            <DownCaret color="#333c4c" />
          </ToolbarButton>
          <ToolbarButton>Eject</ToolbarButton>
          <ToolbarButton>Properties</ToolbarButton>
          <ToolbarButton>Uninstall or change a program</ToolbarButton>
          <ToolbarButton>Map network drive</ToolbarButton>
          <ToolbarButton aria-label="More commands">
            <svg width="9" height="7" viewBox="0 0 9 7">
              <path d="M.5.5l3 3-3 3M5 .5l3 3-3 3" fill="none" stroke="#1e2738" strokeWidth="1.500" />
            </svg>
          </ToolbarButton>
          <ToolbarEnd>
            <ToolbarButton aria-label="Change your view">
              <ViewIcon />
              <svg width="12" height="5" viewBox="0 0 12 5">
                <path d="M4 0h8L8 4.500z" fill="#333c4c" />
              </svg>
            </ToolbarButton>
            <ToolbarButton aria-label="Show the preview pane">
              <PreviewPaneIcon />
            </ToolbarButton>
            <ToolbarButton aria-label="Help">
              <HelpIcon />
            </ToolbarButton>
          </ToolbarEnd>
        </Toolbar>
        <Body>
          <Sidebar>
            {sidebarGroups.map((group) => (
              <SidebarList key={group[0].name}>
                {group.map((item) => (
                  <li key={item.name}>
                    <SidebarButton
                      $child={"child" in item}
                      $selected={"selected" in item}
                    >
                      {item.icon}
                      {item.name}
                    </SidebarButton>
                  </li>
                ))}
              </SidebarList>
            ))}
          </Sidebar>
          <Files>
            <GroupTitle>
              <GroupCaret />
              Hard Disk Drives (1)
            </GroupTitle>
            <DriveButton>
              <HardDiskIcon />
              <DriveText>
                Local Disk (C:)
                <Capacity>
                  <CapacityUsed
                    style={{ width: `${((total - free) / total) * 100}%` }}
                  />
                </Capacity>
                <Muted>
                  {free} GB free of {total} GB
                </Muted>
              </DriveText>
            </DriveButton>
            <GroupTitle>
              <GroupCaret />
              Devices with Removable Storage (1)
            </GroupTitle>
            <DriveButton $selected>
              <CdDriveIcon />
              <DriveText>CD Drive (D:)</DriveText>
            </DriveButton>
          </Files>
        </Body>
        <DetailsPane>
          <CdDriveIcon />
          <div>
            CD Drive (D:)
            <Muted>CD Drive</Muted>
          </div>
        </DetailsPane>
      </Client>
    </Window>
  );
};

const App: React.FC = () => {
  return (
    <Screen>
      <GlobalStyle />
      <Wallpaper />
      <Desktop>
        <ShortcutColumn>
          {shortcuts.map((shortcut) => (
            <Shortcut key={shortcut.lines[0]} {...shortcut} />
          ))}
        </ShortcutColumn>
        <RecycleSpot>
          <Shortcut lines={["Recycle Bin"]} icon={<RecycleBinIcon />} />
        </RecycleSpot>
        <Explorer />
        <Cursor width="13" height="20" viewBox="0 0 13 20" aria-hidden>
          <path
            d="M1 1v15l3.500-3.300L7 18.500l2.500-1L7 12h5z"
            fill="#fff"
            stroke="#111"
          />
        </Cursor>
      </Desktop>
      <Taskbar>
        <StartButton aria-label="Start">
          <StartIcon />
        </StartButton>
        <TaskButton $open $bright aria-label="Windows Explorer">
          <ExplorerIcon />
        </TaskButton>
        <TaskButton aria-label="Media Player">
          <MediaPlayerIcon />
        </TaskButton>
        <TaskButton $open aria-label="Google Chrome">
          <ChromeIcon size={32} />
        </TaskButton>
        <Tray>
          <FlagIcon />
          <TrayNetworkIcon />
          <VolumeIcon />
          <Clock>
            <span>5:23 AM</span>
            <span>5/27/2022</span>
          </Clock>
          <ShowDesktop aria-label="Show desktop" />
        </Tray>
      </Taskbar>
    </Screen>
  );
};

export default App;
